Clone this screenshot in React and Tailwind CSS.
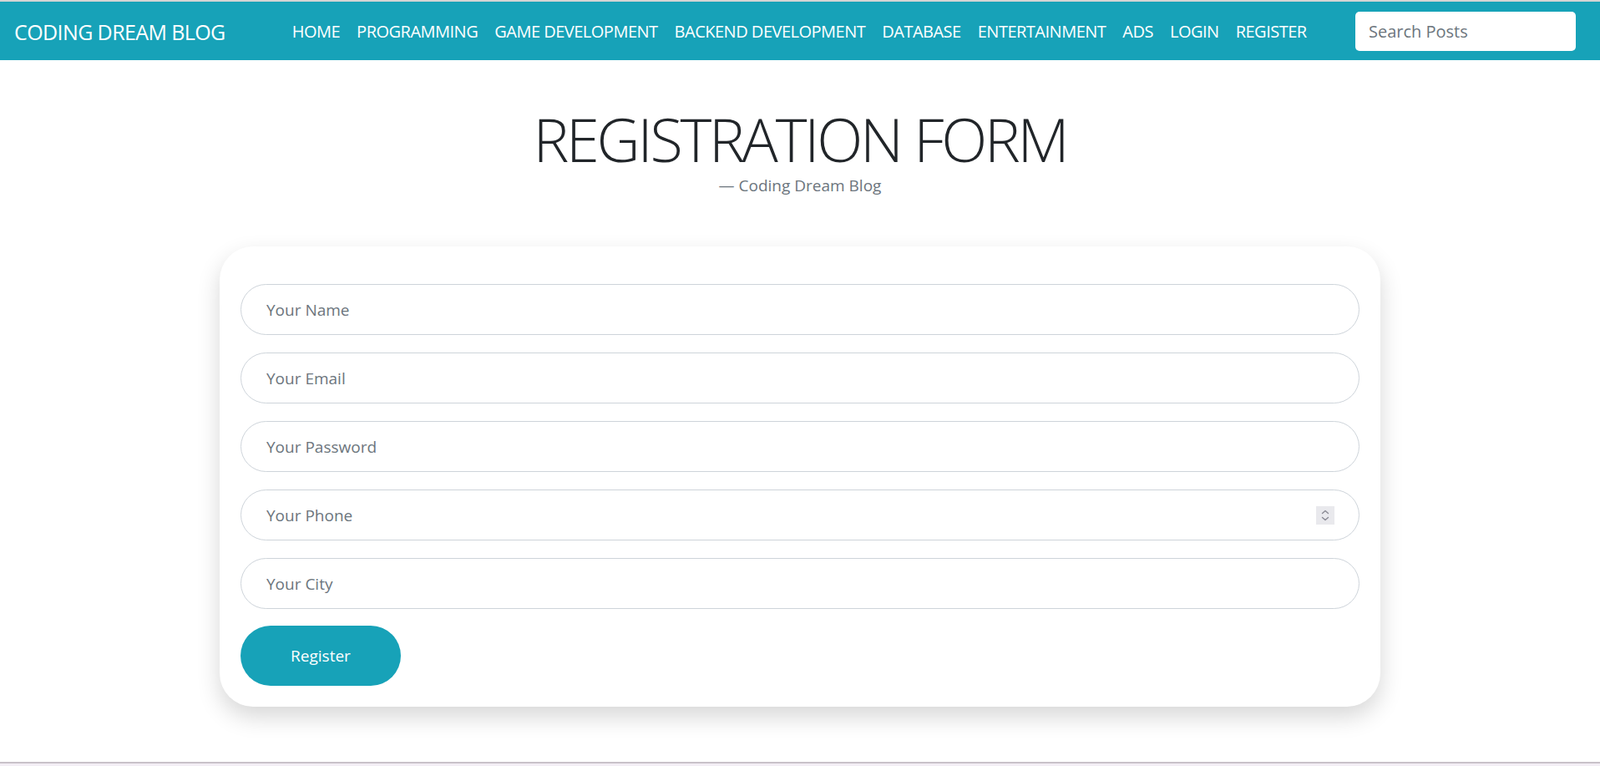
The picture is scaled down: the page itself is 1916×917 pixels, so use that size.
import { useState } from 'react';

const links = ['HOME', 'PROGRAMMING', 'GAME DEVELOPMENT', 'BACKEND DEVELOPMENT', 'DATABASE', 'ENTERTAINMENT', 'ADS', 'LOGIN', 'REGISTER'];

const fields = [
  { name: 'name', placeholder: 'Your Name' },
  { name: 'email', placeholder: 'Your Email' },
  { name: 'password', placeholder: 'Your Password' },
  { name: 'phone', placeholder: 'Your Phone', spinner: true },
  { name: 'city', placeholder: 'Your City' },
];

const Spinner = () => (
  <div className="absolute right-[30px] top-1/2 -translate-y-1/2 w-[22px] h-[22px] bg-[#e9e9ed] flex items-center justify-center">
    <svg width="12" height="16" viewBox="0 0 12 16" fill="none" stroke="#8a8a94" strokeWidth="1.4" strokeLinecap="round" strokeLinejoin="round">
      <path d="M2.5 5.5 6 2.5l3.5 3" />
      <path d="M2.5 10.5 6 13.5l3.5-3" />
    </svg>
  </div>
);

const App = () => {
  const [form, setForm] = useState({ name: '', email: '', password: '', phone: '', city: '' });

  return (
    <div className="min-h-screen bg-white font-['Open_Sans',sans-serif] text-[#212529]">
      {/* Navbar */}
      <div className="border-t-2 border-[#d4d4d4]">
        <nav className="h-[70px] bg-[#17a2b8] flex items-center pl-[17px] pr-[29px]">
          <a href="#" className="text-white text-[25px] leading-none tracking-[-0.6px] mt-[2px]">CODING DREAM BLOG</a>
          <ul className="flex items-center ml-[70px] mt-[2px]">
            {links.map(l => (
              <li key={l}>
                <a href="#" className="block px-[10px] text-white text-[20px] leading-none tracking-[-0.5px]">{l}</a>
              </li>
            ))}
          </ul>
          <input
            type="text"
            placeholder="Search Posts"
            className="ml-auto w-[264px] h-[47px] rounded-[5px] bg-white px-[16px] text-[20px] placeholder:text-[#6c757d] outline-none"
          />
        </nav>
      </div>

      {/* Heading */}
      <div className="text-center pt-[55px]">
        <h1 className="text-[72px] font-light leading-[1.1] tracking-[-3.2px]">REGISTRATION FORM</h1>
        <p className="mt-[7px] text-[19px] leading-none text-[#6c757d]">— Coding Dream Blog</p>
      </div>

      {/* Form card */}
      <div className="mx-[263px] mt-[63px] bg-white rounded-[40px] shadow-[0_12px_28px_rgba(0,0,0,0.16)] px-[25px] pt-[45px] pb-[25px]">
        <form className="flex flex-col gap-[21px]" onSubmit={e => e.preventDefault()}>
          {fields.map(f => (
            <div key={f.name} className="relative">
              <input
                type="text"
                name={f.name}
                value={form[f.name]}
                onChange={e => setForm({ ...form, [f.name]: e.target.value })}
                placeholder={f.placeholder}
                className="w-full h-[61px] rounded-full border border-[#ced4da] px-[30px] text-[19px] placeholder:text-[#6c757d] outline-none"
              />
              {f.spinner && <Spinner />}
            </div>
          ))}
          <button type="submit" className="w-[192px] h-[72px] rounded-full bg-[#17a2b8] text-white text-[19px] -mt-px">
            Register
          </button>
        </form>
      </div>

      {/* Footer edge */}
      <div className="mt-[66px] border-t-2 border-[#c9c1c9] h-[10px] bg-[#f3eef5]" />
    </div>
  );
};

export default App;
